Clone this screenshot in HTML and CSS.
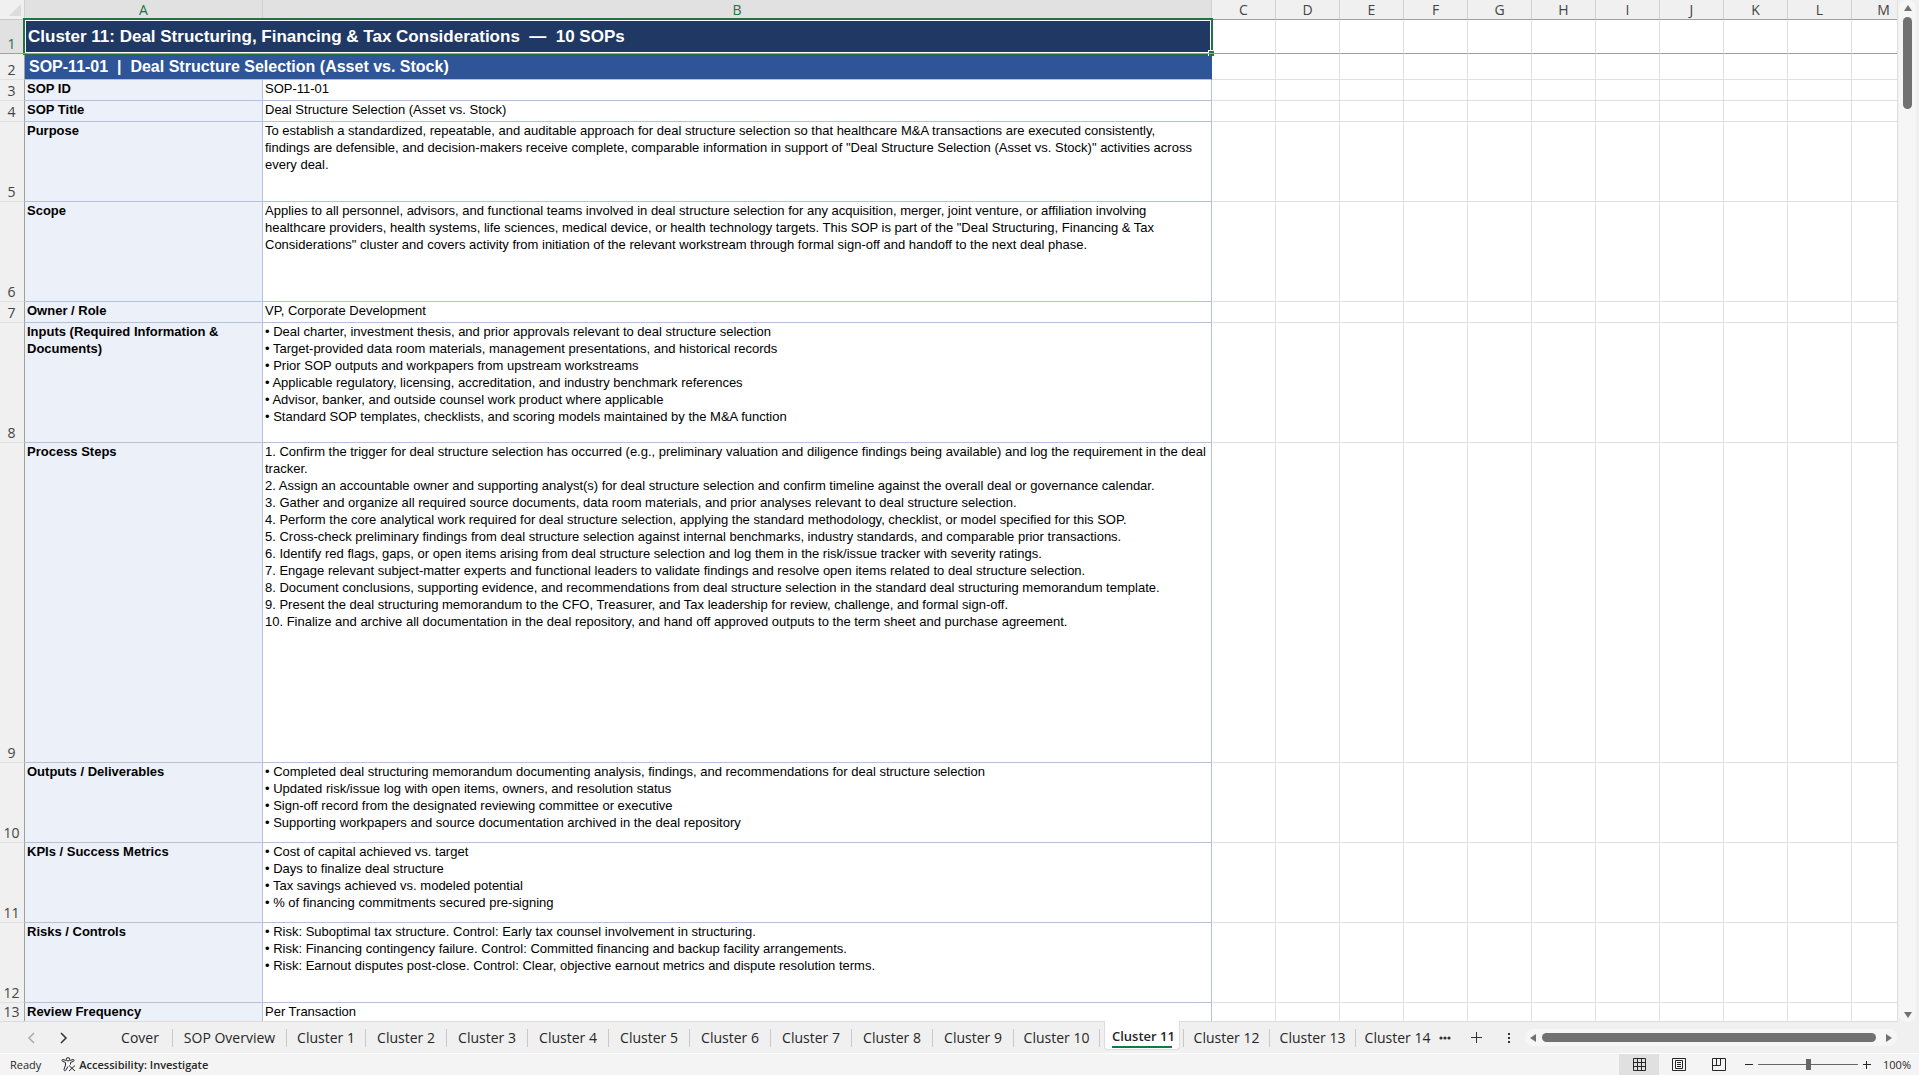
FILE: index.html
```html
<!DOCTYPE html>
<html lang="en">
<head>
<meta charset="utf-8">
<title>SOP Library - Cluster 11</title>
<link rel="stylesheet" href="styles.css">
</head>
<body>
<div class="app">
  <main class="workspace">
    <div class="grid">
      <table class="sheet">
        <colgroup>
          <col class="col-num"><col class="col-a"><col class="col-b">
          <col><col><col><col><col><col><col><col><col><col><col>
        </colgroup>
        <thead>
          <tr>
            <th class="corner"><svg width="24" height="19" aria-hidden="true"><path d="M21 4v12H9z" fill="#dcdcdc"/></svg></th>
            <th class="picked">A</th><th class="picked">B</th>
            <th>C</th><th>D</th><th>E</th><th>F</th><th>G</th><th>H</th><th>I</th><th>J</th><th>K</th><th>L</th><th>M</th>
          </tr>
        </thead>
        <tbody>
          <tr class="h-title frozen"><th class="picked">1</th><td class="title" colspan="2">Cluster 11: Deal Structuring, Financing &amp; Tax Considerations&nbsp; —&nbsp; 10 SOPs<span class="selection"><span class="handle"></span></span></td><td></td><td></td><td></td><td></td><td></td><td></td><td></td><td></td><td></td><td></td><td></td></tr>
          <tr class="h-sub"><th>2</th><td class="subtitle" colspan="2">SOP-11-01&nbsp; |&nbsp; Deal Structure Selection (Asset vs. Stock)</td><td></td><td></td><td></td><td></td><td></td><td></td><td></td><td></td><td></td><td></td><td></td></tr>
          <tr class="h-1"><th>3</th><td class="label">SOP ID</td><td class="text">SOP-11-01</td><td></td><td></td><td></td><td></td><td></td><td></td><td></td><td></td><td></td><td></td><td></td></tr>
          <tr class="h-1"><th>4</th><td class="label">SOP Title</td><td class="text">Deal Structure Selection (Asset vs. Stock)</td><td></td><td></td><td></td><td></td><td></td><td></td><td></td><td></td><td></td><td></td><td></td></tr>
          <tr class="h-4"><th>5</th><td class="label">Purpose</td><td class="text">To establish a standardized, repeatable, and auditable approach for deal structure selection so that healthcare M&amp;A transactions are executed consistently,<br>findings are defensible, and decision-makers receive complete, comparable information in support of "Deal Structure Selection (Asset vs. Stock)" activities across<br>every deal.</td><td></td><td></td><td></td><td></td><td></td><td></td><td></td><td></td><td></td><td></td><td></td></tr>
          <tr class="h-5"><th>6</th><td class="label">Scope</td><td class="text">Applies to all personnel, advisors, and functional teams involved in deal structure selection for any acquisition, merger, joint venture, or affiliation involving<br>healthcare providers, health systems, life sciences, medical device, or health technology targets. This SOP is part of the "Deal Structuring, Financing &amp; Tax<br>Considerations" cluster and covers activity from initiation of the relevant workstream through formal sign-off and handoff to the next deal phase.</td><td></td><td></td><td></td><td></td><td></td><td></td><td></td><td></td><td></td><td></td><td></td></tr>
          <tr class="h-1"><th>7</th><td class="label">Owner / Role</td><td class="text">VP, Corporate Development</td><td></td><td></td><td></td><td></td><td></td><td></td><td></td><td></td><td></td><td></td><td></td></tr>
          <tr class="h-6"><th>8</th><td class="label">Inputs (Required Information &amp;<br>Documents)</td><td class="text">• Deal charter, investment thesis, and prior approvals relevant to deal structure selection<br>• Target-provided data room materials, management presentations, and historical records<br>• Prior SOP outputs and workpapers from upstream workstreams<br>• Applicable regulatory, licensing, accreditation, and industry benchmark references<br>• Advisor, banker, and outside counsel work product where applicable<br>• Standard SOP templates, checklists, and scoring models maintained by the M&amp;A function</td><td></td><td></td><td></td><td></td><td></td><td></td><td></td><td></td><td></td><td></td><td></td></tr>
          <tr class="h-16"><th>9</th><td class="label">Process Steps</td><td class="text">1. Confirm the trigger for deal structure selection has occurred (e.g., preliminary valuation and diligence findings being available) and log the requirement in the deal<br>tracker.<br>2. Assign an accountable owner and supporting analyst(s) for deal structure selection and confirm timeline against the overall deal or governance calendar.<br>3. Gather and organize all required source documents, data room materials, and prior analyses relevant to deal structure selection.<br>4. Perform the core analytical work required for deal structure selection, applying the standard methodology, checklist, or model specified for this SOP.<br>5. Cross-check preliminary findings from deal structure selection against internal benchmarks, industry standards, and comparable prior transactions.<br>6. Identify red flags, gaps, or open items arising from deal structure selection and log them in the risk/issue tracker with severity ratings.<br>7. Engage relevant subject-matter experts and functional leaders to validate findings and resolve open items related to deal structure selection.<br>8. Document conclusions, supporting evidence, and recommendations from deal structure selection in the standard deal structuring memorandum template.<br>9. Present the deal structuring memorandum to the CFO, Treasurer, and Tax leadership for review, challenge, and formal sign-off.<br>10. Finalize and archive all documentation in the deal repository, and hand off approved outputs to the term sheet and purchase agreement.</td><td></td><td></td><td></td><td></td><td></td><td></td><td></td><td></td><td></td><td></td><td></td></tr>
          <tr class="h-4"><th>10</th><td class="label">Outputs / Deliverables</td><td class="text">• Completed deal structuring memorandum documenting analysis, findings, and recommendations for deal structure selection<br>• Updated risk/issue log with open items, owners, and resolution status<br>• Sign-off record from the designated reviewing committee or executive<br>• Supporting workpapers and source documentation archived in the deal repository</td><td></td><td></td><td></td><td></td><td></td><td></td><td></td><td></td><td></td><td></td><td></td></tr>
          <tr class="h-4"><th>11</th><td class="label">KPIs / Success Metrics</td><td class="text">• Cost of capital achieved vs. target<br>• Days to finalize deal structure<br>• Tax savings achieved vs. modeled potential<br>• % of financing commitments secured pre-signing</td><td></td><td></td><td></td><td></td><td></td><td></td><td></td><td></td><td></td><td></td><td></td></tr>
          <tr class="h-4"><th>12</th><td class="label">Risks / Controls</td><td class="text">• Risk: Suboptimal tax structure. Control: Early tax counsel involvement in structuring.<br>• Risk: Financing contingency failure. Control: Committed financing and backup facility arrangements.<br>• Risk: Earnout disputes post-close. Control: Clear, objective earnout metrics and dispute resolution terms.</td><td></td><td></td><td></td><td></td><td></td><td></td><td></td><td></td><td></td><td></td><td></td></tr>
          <tr class="h-last"><th>13</th><td class="label">Review Frequency</td><td class="text">Per Transaction</td><td></td><td></td><td></td><td></td><td></td><td></td><td></td><td></td><td></td><td></td><td></td></tr>
        </tbody>
      </table>
    </div>
    <div class="vscroll">
      <button class="arrow" aria-label="Scroll up"><svg width="10" height="8"><path d="M5 1L9 7H1z"/></svg></button>
      <div class="vthumb"></div>
      <button class="arrow" aria-label="Scroll down"><svg width="10" height="8"><path d="M5 7L9 1H1z"/></svg></button>
    </div>
  </main>

  <nav class="tabbar" aria-label="Sheets">
    <button class="nav dim" aria-label="Previous sheets"><svg width="8" height="12"><path d="M7 1L2 6l5 5"/></svg></button>
    <button class="nav" aria-label="Next sheets"><svg width="8" height="12"><path d="M1 1l5 5-5 5"/></svg></button>
    <div class="tabs">
      <button class="tab cover">Cover</button>
      <button class="tab overview">SOP Overview</button>
      <button class="tab first">Cluster 1</button>
      <button class="tab">Cluster 2</button>
      <button class="tab">Cluster 3</button>
      <button class="tab">Cluster 4</button>
      <button class="tab">Cluster 5</button>
      <button class="tab">Cluster 6</button>
      <button class="tab">Cluster 7</button>
      <button class="tab">Cluster 8</button>
      <button class="tab">Cluster 9</button>
      <button class="tab two">Cluster 10</button>
      <button class="tab active"><span>Cluster 11</span></button>
      <button class="tab two after">Cluster 12</button>
      <button class="tab two">Cluster 13</button>
      <button class="tab last">Cluster 14</button>
    </div>
    <button class="tool more" aria-label="More sheets"><svg width="12" height="4"><circle cx="2" cy="2" r="1.6"/><circle cx="6" cy="2" r="1.6"/><circle cx="10" cy="2" r="1.6"/></svg></button>
    <button class="tool add" aria-label="New sheet"><svg width="12" height="12"><path d="M5 0h1v5h5v1H6v5H5V6H0V5h5z"/></svg></button>
    <button class="tool grip" aria-label="Resize"><svg width="4" height="12"><path d="M1 1h2v2H1zM1 5h2v2H1zM1 9h2v2H1z"/></svg></button>
    <div class="hscroll">
      <button class="arrow" aria-label="Scroll left"><svg width="8" height="10"><path d="M1 5L7 1v8z"/></svg></button>
      <div class="hthumb"></div>
      <button class="arrow" aria-label="Scroll right"><svg width="8" height="10"><path d="M7 5L1 1v8z"/></svg></button>
    </div>
  </nav>

  <footer class="status">
    <span class="ready">Ready</span>
    <button class="access">
      <svg width="15" height="15" viewBox="0 0 15 15" aria-hidden="true"><g fill="none" stroke="#262626" stroke-width="1"><circle cx="7" cy="2.300" r="1.700"/><path d="M5 3.500L2 2.500C.8 2.300.4 3.800 1.500 4.300L4.500 5.500V8L3 12.500c-.2 1.300 1.300 1.700 1.800.7L7 9.500M9 3.500l3-1c1.200-.2 1.600 1.300.5 1.800L9.500 5.500V7.500M8 8.500l6 5.500M14 8.500L8 14"/></g></svg>
      Accessibility: Investigate
    </button>
    <div class="views">
      <button class="view on" aria-label="Normal"><svg width="13" height="13"><path d="M.5.5h12v12H.5zM4.500.5v12M8.500.5v12M.5 4.500h12M.5 8.500h12"/></svg></button>
      <button class="view" aria-label="Page Layout"><svg width="14" height="13"><path d="M.5.5h13v12H.5zM3.500 2.500h7v8h-7zM5 4.500h4M5 6.500h4M5 8.500h4"/></svg></button>
      <button class="view" aria-label="Page Break Preview"><svg width="14" height="13"><path d="M.5.5h13v12H.5zM4.500.5v7M8.500.5v7M.5 7.500h8"/></svg></button>
    </div>
    <button class="zoom-btn" aria-label="Zoom out"><svg width="8" height="8"><path d="M0 3.500h8"/></svg></button>
    <input class="zoom" type="range" min="0" max="200" value="100" aria-label="Zoom">
    <button class="zoom-btn" aria-label="Zoom in"><svg width="8" height="8"><path d="M0 3.500h8M3.500 0v8"/></svg></button>
    <button class="percent">100%</button>
  </footer>
</div>
</body>
</html>
```

FILE: styles.css
```css
* { box-sizing: border-box; }

body {
  margin: 0;
  background: #f0f0f0;
  color: #262626;
  font-family: "Open Sans", "Noto Sans", sans-serif;
}

button {
  margin: 0;
  padding: 0;
  border: 0;
  background: none;
  color: inherit;
  font: inherit;
}

svg { display: block; }

.app {
  display: flex;
  flex-direction: column;
  height: 100vh;
}

/* Worksheet */

.workspace {
  display: flex;
  flex: 1;
  min-height: 0;
}

.grid {
  flex: 1;
  min-width: 0;
  overflow: hidden;
  border-right: 1px solid #e0e0e0;
  border-bottom: 1px solid #dcdcdc;
  background: #fff;
}

.sheet {
  width: 1916px;
  table-layout: fixed;
  border-collapse: separate;
  border-spacing: 0;
}

.sheet col { width: 64px; }
.sheet .col-num { width: 25px; }
.sheet .col-a { width: 238px; }
.sheet .col-b { width: 949px; }

.sheet th,
.sheet td {
  padding: 0;
  border-right: 1px solid #e0e0e0;
  border-bottom: 1px solid #e0e0e0;
}

.sheet th {
  background: #f0f0f0;
  color: #444;
  font-size: 14px;
  font-weight: 400;
  line-height: 17px;
}

.sheet thead th {
  height: 20px;
  border-right-color: #d0d0d0;
  border-bottom-color: #9f9f9f;
}

.sheet tbody th {
  padding: 0 1px 1px 0;
  border-right-color: #9f9f9f;
  vertical-align: bottom;
}

.sheet .corner { border-bottom-color: #c8c8c8; }

.sheet .picked {
  background: #e1e1e1;
  color: #217346;
}

.h-title { height: 34px; }
.h-sub { height: 26px; }
.h-1 { height: 21px; }
.h-4 { height: 80px; }
.h-5 { height: 100px; }
.h-6 { height: 120px; }
.h-16 { height: 320px; }
.h-last { height: 18px; }

.sheet .h-last th,
.sheet .h-last td { border-bottom: 0; }

.sheet .frozen th,
.sheet .frozen td { border-bottom-color: #9f9f9f; }

.sheet .title,
.sheet .subtitle,
.sheet .label,
.sheet .text {
  padding: 0 2px;
  font-family: "Liberation Sans", Arial, sans-serif;
  white-space: nowrap;
}

.sheet .title {
  position: relative;
  padding-left: 3px;
  background: #203864;
  color: #fff;
  font-size: 17px;
  font-weight: 700;
}

.sheet .subtitle {
  padding-left: 4px;
  border-right-color: #2e5597;
  border-bottom-color: #b4c1da;
  background: #2e5597;
  color: #fff;
  font-size: 16px;
  font-weight: 700;
}

.sheet .label,
.sheet .text {
  border-color: #b4c1da;
  color: #000;
  font-size: 13px;
  line-height: 17px;
  vertical-align: top;
}

.sheet .label {
  background: #ebf0f9;
  font-weight: 700;
}

.selection {
  position: absolute;
  inset: -2px;
  border: 2px solid #217346;
  box-shadow: inset 0 0 0 1px #fff;
}

.handle {
  position: absolute;
  right: -3px;
  bottom: -3px;
  width: 6px;
  height: 6px;
  border: solid #fff;
  border-width: 1px 0 0 1px;
  background: #217346;
}

/* Freeze line drawn over the selection frame */
.selection::after {
  content: "";
  position: absolute;
  top: 100%;
  left: -2px;
  right: -3px;
  height: 1px;
  background: #9f9f9f;
}

/* Scroll bars */

.vscroll {
  display: flex;
  flex-direction: column;
  align-items: center;
  justify-content: space-between;
  width: 17px;
  margin: 0 3px 0 1px;
  padding: 4px 0 3px;
  border-radius: 8px;
  background: #f6f6f6;
}

.vthumb {
  width: 9px;
  height: 92px;
  margin: 5px 0 auto;
  border-radius: 5px;
  background: #717171;
}

.arrow svg { fill: #717171; }

.hscroll {
  display: flex;
  flex: 1;
  align-items: center;
  gap: 5px;
  height: 17px;
  margin-right: 22px;
  padding: 0 4px;
  border-radius: 8px;
  background: #f6f6f6;
}

.hthumb {
  flex: 1;
  height: 9px;
  margin-right: 4px;
  border-radius: 5px;
  background: #717171;
}

/* Sheet tabs */

.tabbar {
  display: flex;
  align-items: center;
  height: 31px;
  padding-left: 27px;
  font-size: 14px;
}

.nav {
  width: 8px;
  margin-right: 25px;
}

.nav path {
  fill: none;
  stroke: #333;
  stroke-width: 1.5;
}

.nav.dim path { stroke: #aaa; }

.tabs {
  display: flex;
  align-items: center;
  height: 31px;
  padding-left: 15px;
}

.tab {
  width: 81px;
  height: 18px;
  border-right: 1px solid #c8c8c8;
  line-height: 18px;
  text-align: center;
  white-space: nowrap;
}

.tab.cover { width: 65px; }
.tab.overview { width: 114px; }
.tab.first { width: 79px; }
.tab.two { width: 86px; }

.tab.after {
  width: 87px;
  border-left: 1px solid #c8c8c8;
}

.tab.active {
  align-self: flex-start;
  width: 76px;
  height: 29px;
  margin: -1px 3px 0 4px;
  padding-top: 3px;
  border: 1px solid #dcdcdc;
  border-top: 0;
  border-radius: 0 0 4px 4px;
  background: #fff;
  font-size: 13px;
  font-weight: 600;
}

.tab.active span {
  display: block;
  width: 60px;
  height: 22px;
  margin: 0 auto auto 7px;
  border-bottom: 2px solid #107c41;
  line-height: 20px;
}

.tab.last {
  width: 83px;
  border-right: 0;
}

.tool svg { fill: #333; }
.more { margin-right: 20px; }
.add { margin-right: 24px; }
.grip { margin-right: 14px; }

/* Status bar */

.status {
  display: flex;
  align-items: center;
  height: 22px;
  padding: 0 8px 0 10px;
  border-top: 1px solid #fff;
  background: #f4f4f4;
  font-size: 11px;
}

.access {
  display: flex;
  align-items: center;
  gap: 3px;
  margin: 0 auto 0 20px;
  font-weight: 600;
}

.views {
  display: flex;
  align-self: stretch;
  margin-right: 6px;
}

.view {
  display: grid;
  place-items: center;
  width: 40px;
}

.view.on { background: #e0e0e0; }

.view path,
.zoom-btn path {
  fill: none;
  stroke: #262626;
}

.zoom {
  width: 100px;
  height: 12px;
  margin: 0 5px;
  appearance: none;
  background: linear-gradient(#666, #666) center / 100% 1px no-repeat;
}

.zoom::-webkit-slider-thumb {
  appearance: none;
  width: 5px;
  height: 11px;
  background: #666;
}

.percent {
  width: 40px;
  text-align: right;
}
```
